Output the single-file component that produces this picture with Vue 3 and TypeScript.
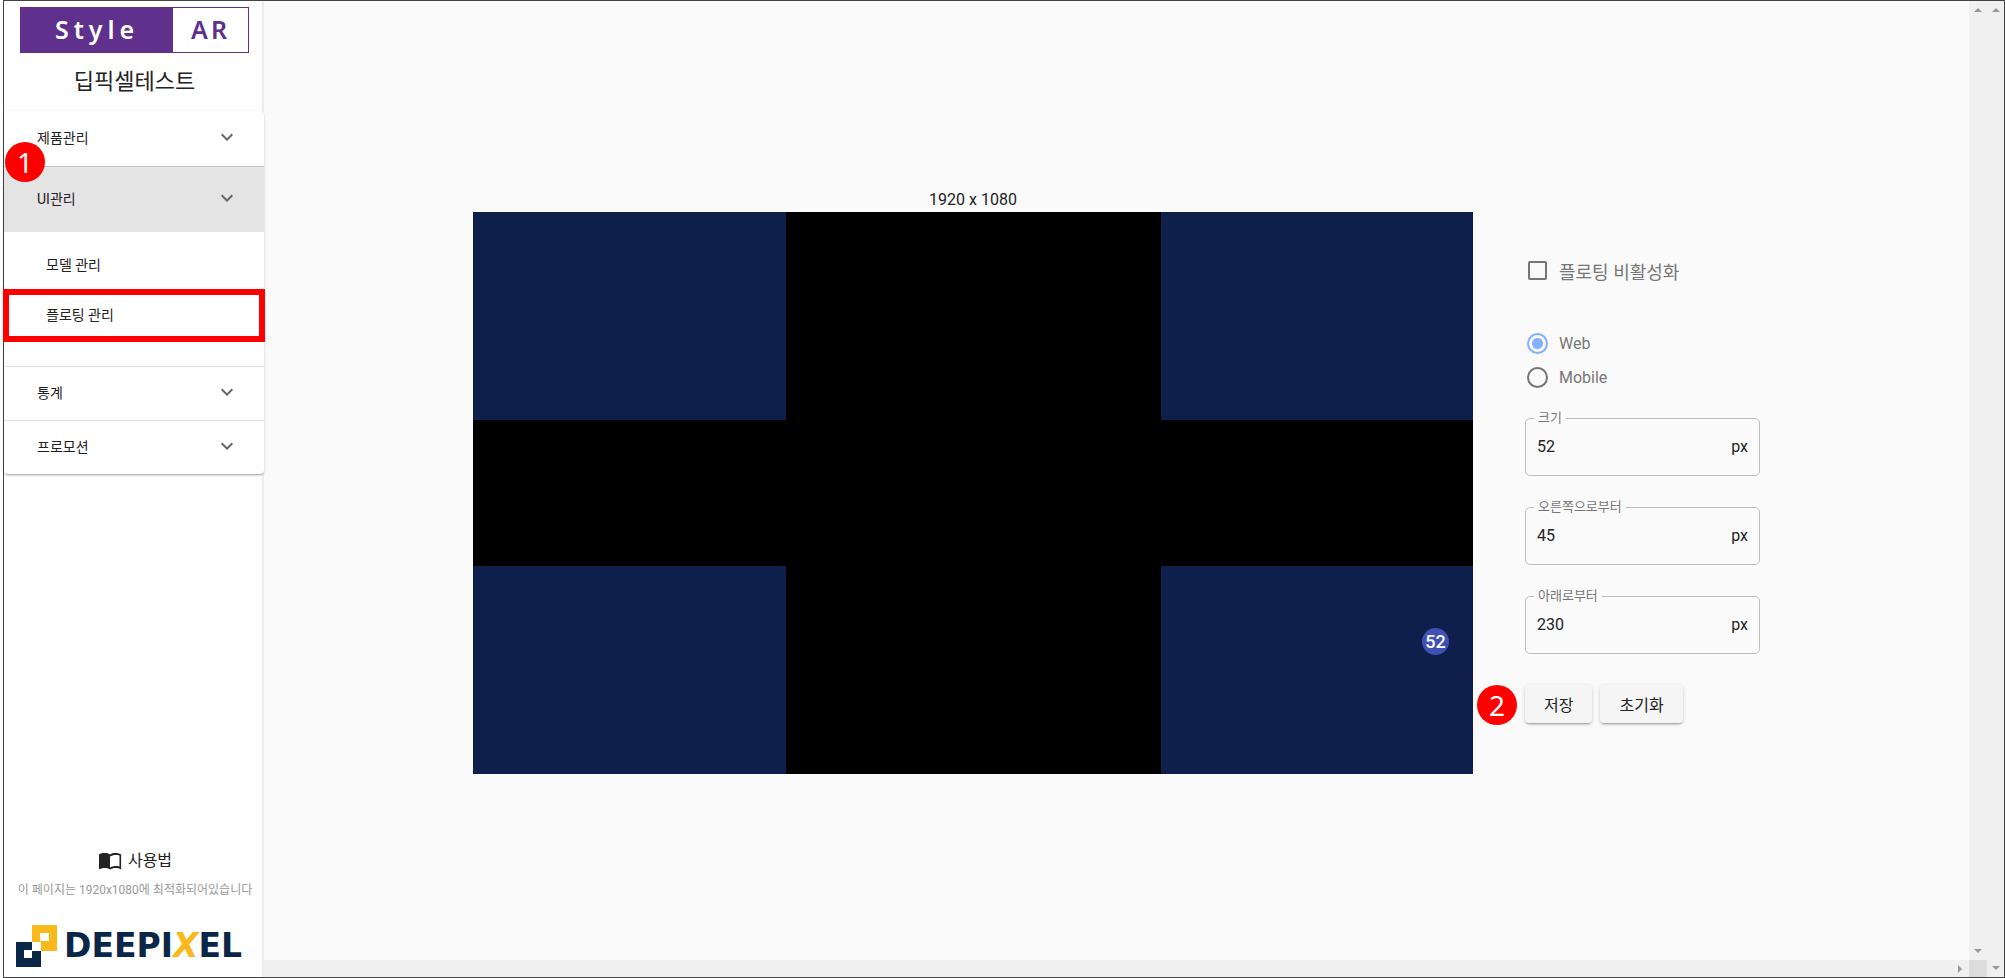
<script setup lang="ts">
import { ref } from 'vue'

interface Field {
  id: string
  label: string
  value: string
}

const disabled = ref(false)
const device = ref('web')
const fields = ref<Field[]>([
  { id: 'size', label: '크기', value: '52' },
  { id: 'right', label: '오른쪽으로부터', value: '45' },
  { id: 'bottom', label: '아래로부터', value: '230' },
])
const stageCells = [true, false, true, false, false, false, true, false, true]
</script>

<template>
  <div class="window">
    <aside class="sidebar">
      <header class="brand">
        <div class="style-logo"><span class="style-word">Style</span><span class="ar-word">AR</span></div>
        <h1 class="company">딥픽셀테스트</h1>
      </header>

      <nav class="menu">
        <button type="button" class="menu-row">
          제품관리
          <svg class="chevron" viewBox="0 0 24 24"><path d="M7.41 8.59 12 13.17l4.59-4.58L18 10l-6 6-6-6z" /></svg>
        </button>
        <div class="group">
          <button type="button" class="menu-row active">
            UI관리
            <svg class="chevron" viewBox="0 0 24 24"><path d="M7.41 8.59 12 13.17l4.59-4.58L18 10l-6 6-6-6z" /></svg>
          </button>
          <span class="marker marker-one">1</span>
        </div>
        <div class="submenu">
          <a href="#model" class="sub-link">모델 관리</a>
          <a href="#floating" class="sub-link selected">플로팅 관리</a>
        </div>
        <button type="button" class="menu-row">
          통계
          <svg class="chevron" viewBox="0 0 24 24"><path d="M7.41 8.59 12 13.17l4.59-4.58L18 10l-6 6-6-6z" /></svg>
        </button>
        <button type="button" class="menu-row">
          프로모션
          <svg class="chevron" viewBox="0 0 24 24"><path d="M7.41 8.59 12 13.17l4.59-4.58L18 10l-6 6-6-6z" /></svg>
        </button>
      </nav>

      <footer class="side-foot">
        <a href="#guide" class="guide">
          <svg class="book" viewBox="0 0 24 18">
            <path d="M22 2C20.900 1.300 19.200 1 17.500 1 15.500 1 13.400 1.400 12 2.500 10.600 1.400 8.500 1 6.500 1 4.500 1 2.400 1.400 1 2.500v14.200c0 .3.300.5.500.5.100 0 .2-.1.300-.1C3.100 16.500 5.100 16 6.500 16c2 0 4.100.4 5.500 1.500 1.400-.9 3.800-1.500 5.500-1.500 1.700 0 3.400.3 4.800 1.100.100.100.200.100.300.100.300 0 .500-.300.500-.500V2.500c-.300-.200-.700-.400-1.100-.500zM21.500 14.500c-1.200-.4-2.600-.5-4-.5-1.700 0-4.100.6-5.500 1.500V4.500C13.400 3.600 15.800 3 17.500 3c1.400 0 2.800.1 4 .5z" />
          </svg>
          사용법
        </a>
        <p class="note">이 페이지는 1920x1080에 최적화되어있습니다</p>
        <div class="deepixel">
          <svg class="mark" viewBox="0 0 41 42">
            <path fill="#f9b91b" fill-rule="evenodd" d="M16 0h25v26H25v-9h-9zM24 8v8h9V8z" />
            <path fill="#0b2748" fill-rule="evenodd" d="M0 17h16v9h9v16H0zM8 25v8h8v-8z" />
            <path fill="#fff" d="M16 17h9v9h-9z" />
          </svg>
          <span class="wordmark">DEEPI<i>X</i>EL</span>
        </div>
      </footer>
    </aside>

    <section class="viewport">
      <main class="content">
        <div class="preview">
          <div class="resolution">1920 x 1080</div>
          <div class="stage">
            <div v-for="(blue, i) in stageCells" :key="i" :class="{ blue }"></div>
            <span class="dot">52</span>
          </div>
        </div>

        <form class="panel" @submit.prevent>
          <label class="option check">
            <input v-model="disabled" type="checkbox" />
            플로팅 비활성화
          </label>
          <div class="radios">
            <label class="option"><input v-model="device" type="radio" name="device" value="web" />Web</label>
            <label class="option"><input v-model="device" type="radio" name="device" value="mobile" />Mobile</label>
          </div>
          <div v-for="f in fields" :key="f.id" class="field">
            <label :for="f.id">{{ f.label }}</label>
            <input :id="f.id" v-model="f.value" type="text" />
            <span>px</span>
          </div>
          <div class="actions">
            <span class="marker marker-two">2</span>
            <button type="submit">저장</button>
            <button type="button">초기화</button>
          </div>
        </form>
      </main>
      <div class="bar-x"><svg class="arrow" viewBox="0 0 8 8"><path d="M2 0v8l4-4z" /></svg></div>
    </section>

    <div class="bar-y">
      <svg class="arrow" viewBox="0 0 8 8"><path d="M0 6h8L4 2z" /></svg>
      <svg class="arrow" viewBox="0 0 8 8"><path d="M0 2h8L4 6z" /></svg>
      <span class="corner"></span>
    </div>
    <div class="bar-y">
      <svg class="arrow" viewBox="0 0 8 8"><path d="M0 6h8L4 2z" /></svg>
      <svg class="arrow" viewBox="0 0 8 8"><path d="M0 2h8L4 6z" /></svg>
    </div>
  </div>
</template>

<style>
body {
  margin: 0;
  background: #fff;
}
</style>

<style scoped>
* {
  box-sizing: border-box;
}

.window {
  display: flex;
  height: 100vh;
  min-height: 760px;
  margin-left: 3px;
  border: 1px solid #444;
  color: #222;
  font-family: Roboto, 'Noto Sans CJK KR', sans-serif;
  font-size: 16px;
}

button,
input {
  font: inherit;
  color: inherit;
}

a {
  color: inherit;
  text-decoration: none;
}

.sidebar {
  display: flex;
  flex: none;
  flex-direction: column;
  width: 260px;
  border-right: 2px solid #ececec;
  background: #fff;
}

.brand {
  padding: 6px 13px 0 16px;
}

.style-logo {
  display: flex;
  height: 46px;
  border: 1px solid #5f308c;
  font-family: 'Noto Sans', sans-serif;
  font-size: 25px;
  font-weight: 600;
  line-height: 42px;
  text-align: center;
}

.style-word {
  flex: 0 0 67%;
  background: #5f308c;
  color: #fff;
  letter-spacing: 5px;
}

.ar-word {
  flex: 1;
  color: #5f308c;
  letter-spacing: 3px;
}

.company {
  height: 58px;
  margin: 0;
  font-size: 22px;
  font-weight: 400;
  line-height: 58px;
  text-align: center;
}

.menu {
  position: relative;
  margin-right: -2px;
  border-radius: 4px;
  background: #fff;
  box-shadow: 0 2px 2px -1px rgba(0, 0, 0, 0.3), 0 1px 3px rgba(0, 0, 0, 0.14);
}

.menu-row {
  display: flex;
  align-items: center;
  justify-content: space-between;
  width: 100%;
  height: 54px;
  padding: 0 25px 3px 33px;
  border: 0;
  border-top: 1px solid #e0e0e0;
  background: none;
  font-size: 14px;
  text-align: left;
}

.menu-row:first-child {
  height: 55px;
  border-top: 0;
}

.chevron {
  width: 24px;
  height: 24px;
  fill: #666;
}

.group {
  position: relative;
}

.group .menu-row {
  height: 66px;
  border-top: 1px solid #c4c4c4;
  background: #e4e4e4;
}

.submenu {
  padding: 8px 0 26px;
}

.sub-link {
  position: relative;
  display: block;
  padding-left: 42px;
  font-size: 14px;
  line-height: 50px;
}

.sub-link.selected::after {
  position: absolute;
  inset: -1px -1px -2px;
  border: 6px solid #f00;
  content: '';
}

.marker {
  position: absolute;
  z-index: 2;
  width: 40px;
  height: 40px;
  border-radius: 50%;
  background: #f00;
  color: #fff;
  font-family: 'Noto Sans', sans-serif;
  font-size: 28px;
  line-height: 40px;
  text-align: center;
}

.marker-one {
  top: -24px;
  left: 1px;
}

.side-foot {
  margin-top: auto;
  padding: 0 8px 10px 12px;
  text-align: center;
}

.guide {
  display: flex;
  align-items: center;
  justify-content: center;
  gap: 6px;
  line-height: 24px;
}

.book {
  width: 24px;
  height: 18px;
  fill: #222;
}

.note {
  display: flex;
  justify-content: center;
  margin: 8px 0 26px;
  color: #999;
  font-size: 12px;
  line-height: 18px;
  white-space: nowrap;
}

.deepixel {
  display: flex;
  align-items: center;
  gap: 7px;
}

.mark {
  flex: none;
  width: 41px;
  height: 42px;
}

.wordmark {
  color: #0b2748;
  font-family: 'DejaVu Sans', sans-serif;
  font-size: 33px;
  font-weight: 700;
  line-height: 42px;
}

.wordmark i {
  color: #f9b91b;
}

.viewport {
  display: flex;
  flex: 1;
  flex-direction: column;
  min-width: 0;
  background: #fafafa;
}

.content {
  display: flex;
  flex: 1;
  align-items: center;
  justify-content: center;
  gap: 52px;
}

.preview {
  flex: 0 1 1000px;
  min-width: 0;
}

.resolution {
  line-height: 25px;
  text-align: center;
}

.stage {
  position: relative;
  display: grid;
  grid-template-rows: 37% 26% 37%;
  grid-template-columns: 5fr 6fr 5fr;
  aspect-ratio: 16 / 9;
  background: #000;
}

.blue {
  background: #0d1f4a;
}

.dot {
  position: absolute;
  right: 24px;
  bottom: 119px;
  width: 27px;
  height: 27px;
  border-radius: 50%;
  background: #3f51b5;
  color: #fff;
  font-size: 18px;
  font-weight: 500;
  line-height: 27px;
  text-align: center;
}

.panel {
  flex: 0 0 235px;
  min-width: 0;
  padding-top: 15px;
}

.option {
  display: flex;
  align-items: center;
  gap: 11px;
  height: 34px;
  padding-left: 2px;
  color: #777;
}

.option input {
  flex: none;
  width: 21px;
  height: 21px;
  margin: 0;
  border: 2px solid #757575;
  border-radius: 50%;
  appearance: none;
}

.option input:checked {
  border-color: #82b1ff;
  background: radial-gradient(circle, #82b1ff 5px, transparent 6px);
}

.check {
  font-size: 18px;
}

.check input {
  width: 19px;
  height: 19px;
  margin: 0 1px;
  border-radius: 2px;
}

.radios {
  margin: 39px 0 23px;
}

.field {
  position: relative;
  display: flex;
  align-items: center;
  height: 58px;
  margin-bottom: 31px;
  padding: 0 11px;
  border: 1px solid #bdbdbd;
  border-radius: 5px;
}

.field label {
  position: absolute;
  top: -10px;
  left: 8px;
  padding: 0 4px;
  background: #fafafa;
  color: #777;
  font-size: 13px;
  line-height: 18px;
}

.field input {
  flex: 1;
  width: 100%;
  min-width: 0;
  padding: 0;
  border: 0;
  background: none;
  outline: 0;
}

.actions {
  position: relative;
  display: flex;
  gap: 8px;
}

.actions button {
  height: 38px;
  padding: 0 19px;
  border: 0;
  border-radius: 4px;
  background: #f5f5f5;
  box-shadow: 0 2px 2px -1px rgba(0, 0, 0, 0.3), 0 1px 4px rgba(0, 0, 0, 0.16);
}

.marker-two {
  top: 0;
  left: -48px;
}

.bar-x {
  display: flex;
  align-items: center;
  justify-content: flex-end;
  height: 17px;
  padding-right: 5px;
  background: #f0f0f0;
}

.bar-y {
  display: flex;
  flex: none;
  flex-direction: column;
  align-items: center;
  justify-content: space-between;
  width: 17px;
  padding: 5px 0;
  background: #f0f0f0;
}

.bar-y:has(.corner) {
  width: 18px;
  padding-bottom: 0;
}

.bar-y .arrow:nth-child(2) {
  margin-top: auto;
}

.corner {
  width: 18px;
  height: 17px;
  margin-top: 5px;
  background: #dcdcdc;
}

.arrow {
  flex: none;
  width: 8px;
  height: 8px;
  fill: #999;
}
</style>
